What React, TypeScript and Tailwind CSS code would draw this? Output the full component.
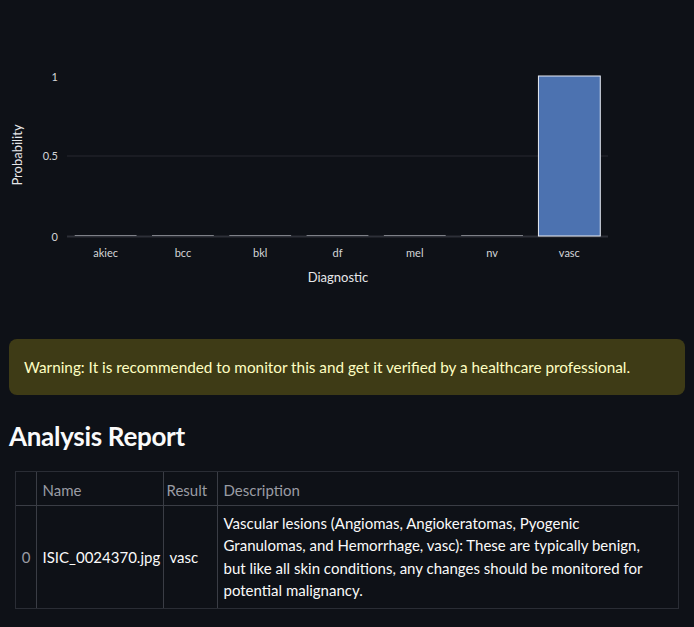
import React from 'react';

const FONT = '"Lato", "Noto Sans", "Liberation Sans", sans-serif';

const CATEGORIES = [
  { name: 'akiec', value: 0 },
  { name: 'bcc', value: 0 },
  { name: 'bkl', value: 0 },
  { name: 'df', value: 0 },
  { name: 'mel', value: 0 },
  { name: 'nv', value: 0 },
  { name: 'vasc', value: 1 },
];

// plot area in page coordinates
const X0 = 67;
const X1 = 608;
const Y0 = 236;
const YTOP = 76;

const ProbabilityChart: React.FC = () => {
  const step = (X1 - X0) / CATEGORIES.length;
  const barW = step * 0.8;
  const yOf = (v: number) => Y0 - v * (Y0 - YTOP);

  return (
    <svg width={676} height={339} viewBox="9 0 676 339" className="block" style={{ fontFamily: FONT }}>
      <line x1={X0} x2={X1} y1={yOf(0.5)} y2={yOf(0.5)} stroke="#262831" strokeWidth={1} />
      <line x1={X0} x2={X1} y1={Y0 + 0.5} y2={Y0 + 0.5} stroke="#2c2f37" strokeWidth={2} />

      {CATEGORIES.map((c, i) => {
        const x = X0 + i * step + (step - barW) / 2;
        const cx = X0 + i * step + step / 2;
        return (
          <g key={c.name}>
            {c.value > 0 ? (
              <rect
                x={x}
                y={yOf(c.value)}
                width={barW}
                height={Y0 - yOf(c.value)}
                fill="#4c72b0"
                stroke="#e8ecf4"
                strokeWidth={1}
              />
            ) : (
              <line x1={x} x2={x + barW} y1={Y0 - 0.5} y2={Y0 - 0.5} stroke="#7e8087" strokeWidth={1} />
            )}
            <text x={cx} y={257} textAnchor="middle" fontSize={11} fill="#d4d5d8">
              {c.name}
            </text>
          </g>
        );
      })}

      <text x={58} y={81} textAnchor="end" fontSize={11} fill="#d4d5d8">1</text>
      <text x={58} y={160} textAnchor="end" fontSize={11} fill="#d4d5d8">0.5</text>
      <text x={58} y={241} textAnchor="end" fontSize={11} fill="#d4d5d8">0</text>

      <text x={338} y={282} textAnchor="middle" fontSize={13} fill="#e6e7ea">Diagnostic</text>
      <text
        x={22}
        y={155}
        textAnchor="middle"
        fontSize={13}
        fill="#e6e7ea"
        transform="rotate(-90 22 155)"
      >
        Probability
      </text>
    </svg>
  );
};

const DESCRIPTION = [
  'Vascular lesions (Angiomas, Angiokeratomas, Pyogenic',
  'Granulomas, and Hemorrhage, vasc): These are typically benign,',
  'but like all skin conditions, any changes should be monitored for',
  'potential malignancy.',
];

export default function App() {
  return (
    <div className="min-h-[627px] bg-[#0e1117] px-[9px] text-[#fafafa]" style={{ fontFamily: FONT }}>
      <ProbabilityChart />

      {/* warning */}
      <div className="flex h-[56px] items-center rounded-lg bg-[#3e3b16] px-[15px] text-[15.3px] text-[#ffffc2]">
        Warning: It is recommended to monitor this and get it verified by a healthcare professional.
      </div>

      <h3 className="mt-[24px] text-[26px] font-bold leading-[34px] tracking-[-0.3px] text-[#fafafa]">
        Analysis Report
      </h3>

      {/* report table */}
      <div className="mx-[6px] mt-[18px] border border-[#2a2d35]">
        <table className="w-full table-fixed border-collapse text-[15px]">
          <colgroup>
            <col className="w-[20px]" />
            <col className="w-[127px]" />
            <col className="w-[54px]" />
            <col />
          </colgroup>
          <thead>
            <tr className="h-[33px] text-[#9a9ca4]">
              <th className="border-r border-b border-[#3a3d45] pt-[3px]"></th>
              <th className="border-r border-b border-[#3a3d45] px-[6px] pt-[3px] text-left font-normal">Name</th>
              <th className="border-r border-b border-[#3a3d45] px-[3px] pt-[3px] text-left font-normal">Result</th>
              <th className="border-b border-[#3a3d45] px-[6px] pt-[3px] text-left font-normal">Description</th>
            </tr>
          </thead>
          <tbody>
            <tr className="h-[103px]">
              <td className="border-r border-[#3a3d45] pr-[5px] text-right text-[#9a9ca4]">0</td>
              <td className="border-r border-[#3a3d45] px-[6px] whitespace-nowrap">ISIC_0024370.jpg</td>
              <td className="border-r border-[#3a3d45] px-[6px]">vasc</td>
              <td className="px-[6px] py-[6px] leading-[22.5px]">
                {DESCRIPTION.map((line) => (
                  <div key={line} className="whitespace-nowrap">{line}</div>
                ))}
              </td>
            </tr>
          </tbody>
        </table>
      </div>
    </div>
  );
}
